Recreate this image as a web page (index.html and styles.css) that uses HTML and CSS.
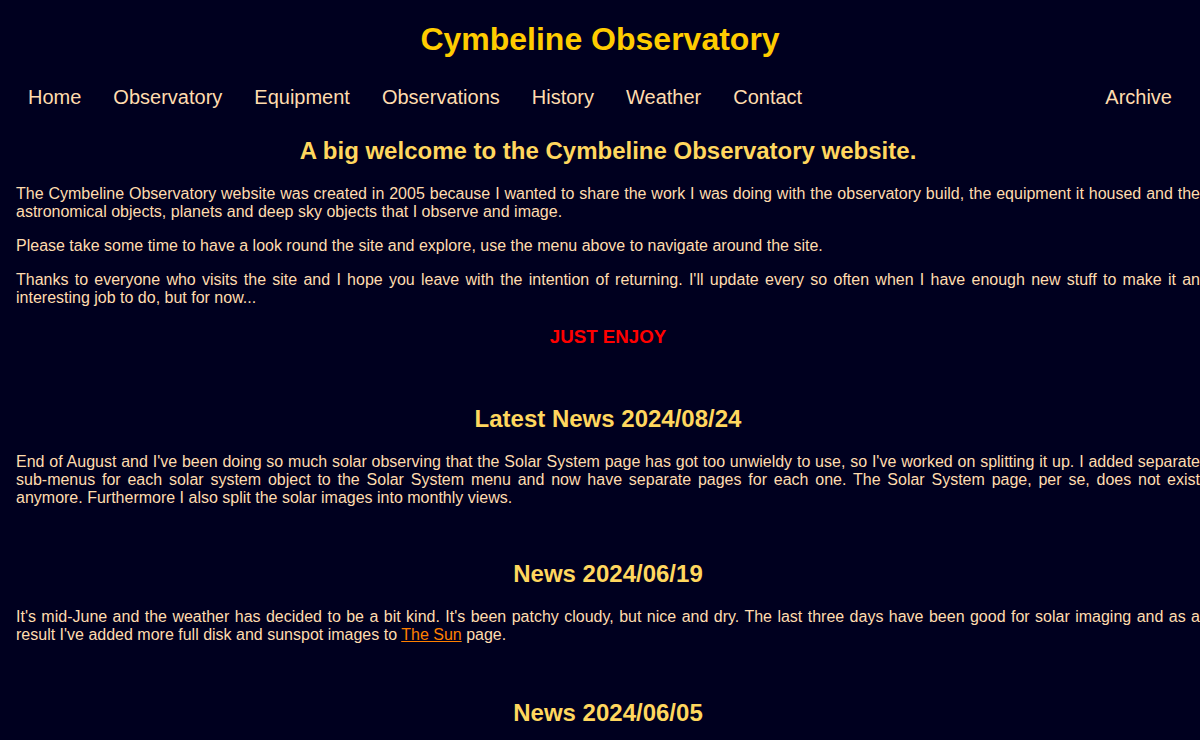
FILE: index.html
```html
<!DOCTYPE html>
<html>
<head>
<meta charset="utf-8">
<title>Cymbeline Observatory</title>
<link rel="stylesheet" href="styles.css">
</head>
<body>
<header class="site-header">
  <h1 class="site-title">Cymbeline Observatory</h1>
  <nav class="nav">
    <ul class="nav-main">
      <li><a href="#">Home</a></li>
      <li><a href="#">Observatory</a></li>
      <li><a href="#">Equipment</a></li>
      <li><a href="#">Observations</a></li>
      <li><a href="#">History</a></li>
      <li><a href="#">Weather</a></li>
      <li><a href="#">Contact</a></li>
    </ul>
    <ul class="nav-side">
      <li><a href="#">Archive</a></li>
    </ul>
  </nav>
</header>
<main class="content">
  <section class="section section-first">
    <h2 class="heading">A big welcome to the Cymbeline Observatory website.</h2>
    <p>The Cymbeline Observatory website was created in 2005 because I wanted to share the work I was doing with the observatory build, the equipment it housed and the astronomical objects, planets and deep sky objects that I observe and image.</p>
    <p>Please take some time to have a look round the site and explore, use the menu above to navigate around the site.</p>
    <p>Thanks to everyone who visits the site and I hope you leave with the intention of returning. I'll update every so often when I have enough new stuff to make it an interesting job to do, but for now...</p>
    <h3 class="enjoy">JUST ENJOY</h3>
  </section>
  <section class="section">
    <h2 class="heading">Latest News 2024/08/24</h2>
    <p>End of August and I've been doing so much solar observing that the Solar System page has got too unwieldy to use, so I've worked on splitting it up. I added separate sub-menus for each solar system object to the Solar System menu and now have separate pages for each one. The Solar System page, per se, does not exist anymore. Furthermore I also split the solar images into monthly views.</p>
  </section>
  <section class="section">
    <h2 class="heading">News 2024/06/19</h2>
    <p>It's mid-June and the weather has decided to be a bit kind. It's been patchy cloudy, but nice and dry. The last three days have been good for solar imaging and as a result I've added more full disk and sunspot images to <a class="link" href="#">The Sun</a> page.</p>
  </section>
  <section class="section section-last">
    <h2 class="heading">News 2024/06/05</h2>
  </section>
</main>
</body>
</html>
```
FILE: styles.css
```css
html, body {
  margin: 0;
  padding: 0;
  background: #00001f;
  overflow: hidden;
}
body {
  font-family: "Liberation Sans", Arial, sans-serif;
  color: #ffdcae;
  width: 1200px;
}
.site-header {
  padding-top: 21px;
}
.site-title {
  margin: 0;
  text-align: center;
  font-size: 32px;
  font-weight: bold;
  color: #ffcc00;
  line-height: 37px;
}
.nav {
  display: flex;
  justify-content: space-between;
  padding: 0 12px;
  margin-top: 26px;
}
.nav ul {
  list-style: none;
  margin: 0;
  padding: 0;
  display: flex;
}
.nav a {
  display: block;
  padding: 0 16px;
  font-size: 20px;
  line-height: 26px;
  color: #ffdcae;
  text-decoration: none;
}
.content {
  padding: 0 0 0 16px;
  width: 1200px;
  box-sizing: border-box;
  margin-top: 27px;
}
.section {
  padding-top: 37px;
}
.section-first {
  padding-top: 0;
  padding-bottom: 20px;
}
.section-last {
  padding-top: 39px;
}
.heading {
  font-size: 24px;
  font-weight: bold;
  color: #ffd75e;
  text-align: center;
  margin: 0 0 20px 0;
}
p {
  font-size: 16px;
  margin: 0 0 16px 0;
  text-align: justify;
}
.enjoy {
  color: #ff0000;
  font-size: 18.72px;
  text-align: center;
  margin: 19px 0 0 0;
}
.link {
  color: #ff8000;
}
```
